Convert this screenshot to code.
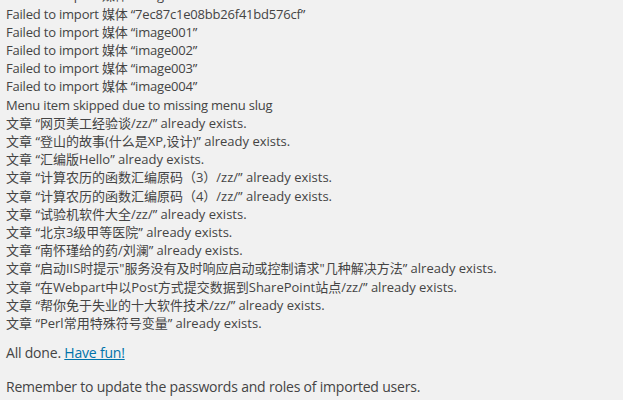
const failed = [
  'Failed to import 媒体 “image000”',
  'Failed to import 媒体 “7ec87c1e08bb26f41bd576cf”',
  'Failed to import 媒体 “image001”',
  'Failed to import 媒体 “image002”',
  'Failed to import 媒体 “image003”',
  'Failed to import 媒体 “image004”',
  'Menu item skipped due to missing menu slug',
];

const posts = [
  '网页美工经验谈/zz/',
  '登山的故事(什么是XP,设计)',
  '汇编版Hello',
  '计算农历的函数汇编原码（3）/zz/',
  '计算农历的函数汇编原码（4）/zz/',
  '试验机软件大全/zz/',
  '北京3级甲等医院',
  '南怀瑾给的药/刘澜',
  '启动IIS时提示"服务没有及时响应启动或控制请求"几种解决方法',
  '在Webpart中以Post方式提交数据到SharePoint站点/zz/',
  '帮你免于失业的十大软件技术/zz/',
  'Perl常用特殊符号变量',
];

export default function App() {
  return (
    <div className="h-[400px] overflow-hidden bg-[#f1f1f1] text-[#444] text-[13px] leading-[18.2px] font-['Open_Sans','Noto_Sans_CJK_SC',sans-serif]">
      <div className="-mt-[13.7px] pl-[6px]">
        <div>
          {failed.map((l, i) => (
            <div key={i} className="tracking-[-0.2px]">{l}</div>
          ))}
          {posts.map((p, i) => (
            <div key={i}>文章 “{p}” already exists.</div>
          ))}
        </div>
        <p className="mt-[11px] text-[14px] leading-[19.6px] tracking-[-0.2px]">
          All done. <a href="#" className="text-[#0073aa] underline">Have fun!</a>
        </p>
        <p className="mt-[14px] text-[14px] leading-[19.6px] tracking-[-0.2px]">
          Remember to update the passwords and roles of imported users.
        </p>
      </div>
    </div>
  );
}
